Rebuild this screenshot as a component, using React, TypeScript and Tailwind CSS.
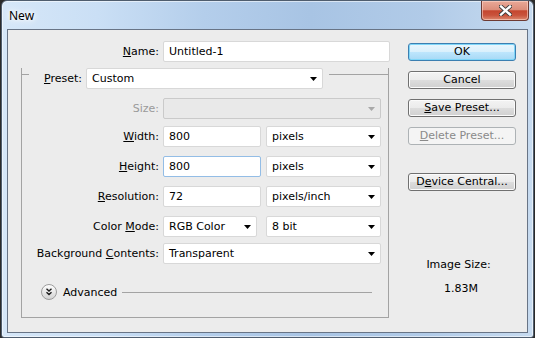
import React from "react";

function Arrow({ disabled }: { disabled?: boolean }) {
  return (
    <svg width="7" height="4" viewBox="0 0 7 4">
      <polygon points="0,0 7,0 3.5,4" fill={disabled ? "#a8a8a8" : "#000"} />
    </svg>
  );
}

function Select({ value, className, disabled }: { value?: string; className: string; disabled?: boolean }) {
  return (
    <div
      className={`flex h-[21px] items-center justify-between rounded-[2px] border pl-[5px] pr-[5px] ${
        disabled ? "border-[#cacaca] bg-[#e9e9e9]" : "border-[#d8d8d8] bg-white"
      } ${className}`}
    >
      <span>{value}</span>
      <Arrow disabled={disabled} />
    </div>
  );
}

function Input({ value, className, focused }: { value: string; className: string; focused?: boolean }) {
  return (
    <div
      className={`flex h-[21px] items-center rounded-[2px] border bg-white pl-[5px] ${
        focused ? "border-[#93bde6]" : "border-[#d8d8d8]"
      } ${className}`}
    >
      {value}
    </div>
  );
}

function Row({ label, children, className }: { label: React.ReactNode; children: React.ReactNode; className: string }) {
  return (
    <div className={`flex h-[21px] items-center ${className}`}>
      <div className="w-[137px] text-right">{label}</div>
      <div className="ml-[4px] flex items-center">{children}</div>
    </div>
  );
}

function Btn({ children, kind, className }: { children: React.ReactNode; kind?: "default" | "disabled"; className?: string }) {
  let cls =
    "border-[#707070] bg-[linear-gradient(to_bottom,#f3f3f3_0%,#ebebeb_50%,#dddddd_50%,#d0d0d0_100%)] shadow-[inset_0_0_0_1px_#fbfbfb] text-black";
  if (kind === "default")
    cls =
      "border-[#3c7fb1] bg-[linear-gradient(to_bottom,#eaf6fd_0%,#d9f0fc_50%,#bee6fd_50%,#a7d9f5_100%)] shadow-[inset_0_0_0_1px_#7fd6f8] text-black";
  if (kind === "disabled") cls = "border-[#adb2b5] bg-[#f4f4f4] text-[#8a8a8a]";
  return (
    <div className={`flex h-[18px] w-[108px] items-center justify-center rounded-[3px] border leading-[14px] ${cls} ${className ?? ""}`}>
      {children}
    </div>
  );
}

const U = ({ children }: { children: React.ReactNode }) => <span className="underline underline-offset-[1px]">{children}</span>;

export default function App() {
  return (
    <div className="h-[338px] w-[535px] overflow-hidden bg-[#2b2b2b] font-['DejaVu_Sans',Verdana,sans-serif] text-[11px] leading-[13px] text-black">
      <div className="ml-[1px] flex h-[338px] w-[533px] flex-col rounded-t-[6px] rounded-b-[3px] border border-[#4f5d6e] bg-[linear-gradient(to_right,#d6e7f8_0%,#cadff5_18%,#b4ceeb_38%,#a8c4e4_58%,#b1cbe8_80%,#c7dbf0_100%)] shadow-[inset_0_0_0_1px_rgba(255,255,255,0.55)]">
        {/* title bar */}
        <div className="flex h-[28px] justify-between">
          <div className="pl-[7px] pt-[7px] font-['Noto_Sans',sans-serif] text-[12px] leading-[16px] text-black [text-shadow:0_0_6px_#fff,0_0_10px_#fff,0_0_3px_#fff]">
            New
          </div>
          <div className="mr-[4px] flex h-[20px] w-[48px] items-center justify-center rounded-b-[4px] border border-t-0 border-[#6d3a33] bg-[linear-gradient(to_bottom,#e9a998_0%,#dc8e7b_45%,#c5462f_52%,#c9533c_75%,#dd8a70_100%)] shadow-[inset_0_0_0_1px_rgba(255,220,210,0.55)]">
            <svg width="13" height="11" viewBox="0 0 13 11">
              <path d="M2 1.5 L11 9.5 M11 1.5 L2 9.5" stroke="#3a3a3a" strokeWidth="4.2" strokeLinecap="square" />
              <path d="M2 1.5 L11 9.5 M11 1.5 L2 9.5" stroke="#ffffff" strokeWidth="2.4" strokeLinecap="square" />
            </svg>
          </div>
        </div>

        {/* client panel */}
        <div className="ml-[5px] flex h-[304px] w-[521px] border border-[#687486] bg-[#ececec]">
          {/* left column */}
          <div className="w-[383px] pt-[11px]">
            <div className="flex h-[21px] items-center">
              <div className="w-[151px] text-right">
                <U>N</U>ame:
              </div>
              <Input value="Untitled-1" className="ml-[4px] w-[227px]" />
            </div>

            <div className="ml-[13px] mt-[12px] w-[368px] border-x border-b border-[#a3a3a3] pb-[17px]">
              <div className="-mt-[6px] flex h-[21px]">
                <div className="mt-[6px] w-[7px] border-t border-[#a3a3a3]" />
                <div className="w-[53px] text-right leading-[21px]">
                  <U>P</U>reset:
                </div>
                <Select value="Custom" className="ml-[4px] w-[237px]" />
                <div className="ml-[6px] mt-[6px] flex-1 border-t border-[#a3a3a3]" />
              </div>

              <Row label={<span className="text-[#9a9a9a]">Size:</span>} className="mt-[9px]">
                <Select className="w-[218px]" disabled />
              </Row>
              <Row
                label={
                  <>
                    <U>W</U>idth:
                  </>
                }
                className="mt-[7px]"
              >
                <Input value="800" className="w-[98px]" />
                <Select value="pixels" className="ml-[5px] w-[115px]" />
              </Row>
              <Row
                label={
                  <>
                    <U>H</U>eight:
                  </>
                }
                className="mt-[9px]"
              >
                <Input value="800" className="w-[98px]" focused />
                <Select value="pixels" className="ml-[5px] w-[115px]" />
              </Row>
              <Row
                label={
                  <>
                    <U>R</U>esolution:
                  </>
                }
                className="mt-[9px]"
              >
                <Input value="72" className="w-[98px]" />
                <Select value="pixels/inch" className="ml-[5px] w-[115px]" />
              </Row>
              <Row
                label={
                  <>
                    Color <U>M</U>ode:
                  </>
                }
                className="mt-[9px]"
              >
                <Select value="RGB Color" className="w-[94px]" />
                <Select value="8 bit" className="ml-[9px] w-[115px]" />
              </Row>
              <Row
                label={
                  <>
                    Background <U>C</U>ontents:
                  </>
                }
                className="mt-[6px]"
              >
                <Select value="Transparent" className="w-[218px]" />
              </Row>

              <div className="mt-[20px] flex h-[16px] items-center">
                <svg className="ml-[19px]" width="16" height="16" viewBox="0 0 16 16">
                  <defs>
                    <linearGradient id="adv" x1="0" y1="0" x2="0" y2="1">
                      <stop offset="0" stopColor="#ffffff" />
                      <stop offset="1" stopColor="#d2d2d2" />
                    </linearGradient>
                  </defs>
                  <circle cx="8" cy="8" r="7.5" fill="url(#adv)" stroke="#9c9c9c" />
                  <path d="M5.5 4.8 L8 7 L10.5 4.8 M5.5 8.3 L8 10.5 L10.5 8.3" fill="none" stroke="#1e1e1e" strokeWidth="1.4" />
                </svg>
                <span className="ml-[6px]">Advanced</span>
                <div className="ml-[5px] mr-[16px] h-0 flex-1 border-t border-[#a3a3a3]" />
              </div>
            </div>
          </div>

          {/* right column */}
          <div className="ml-[17px] flex w-[108px] flex-col pt-[13px]">
            <Btn kind="default">OK</Btn>
            <Btn className="mt-[10px]">Cancel</Btn>
            <Btn className="mt-[10px]">
              <span>
                <U>S</U>ave Preset...
              </span>
            </Btn>
            <Btn kind="disabled" className="mt-[10px]">
              <span>
                <U>D</U>elete Preset...
              </span>
            </Btn>
            <Btn className="mt-[28px]">
              <span>
                D<U>e</U>vice Central...
              </span>
            </Btn>
            <div className="mt-[67px] pr-[7px] text-center">Image Size:</div>
            <div className="mt-[11px] pr-[2px] text-center">1.83M</div>
          </div>
        </div>
      </div>
    </div>
  );
}
